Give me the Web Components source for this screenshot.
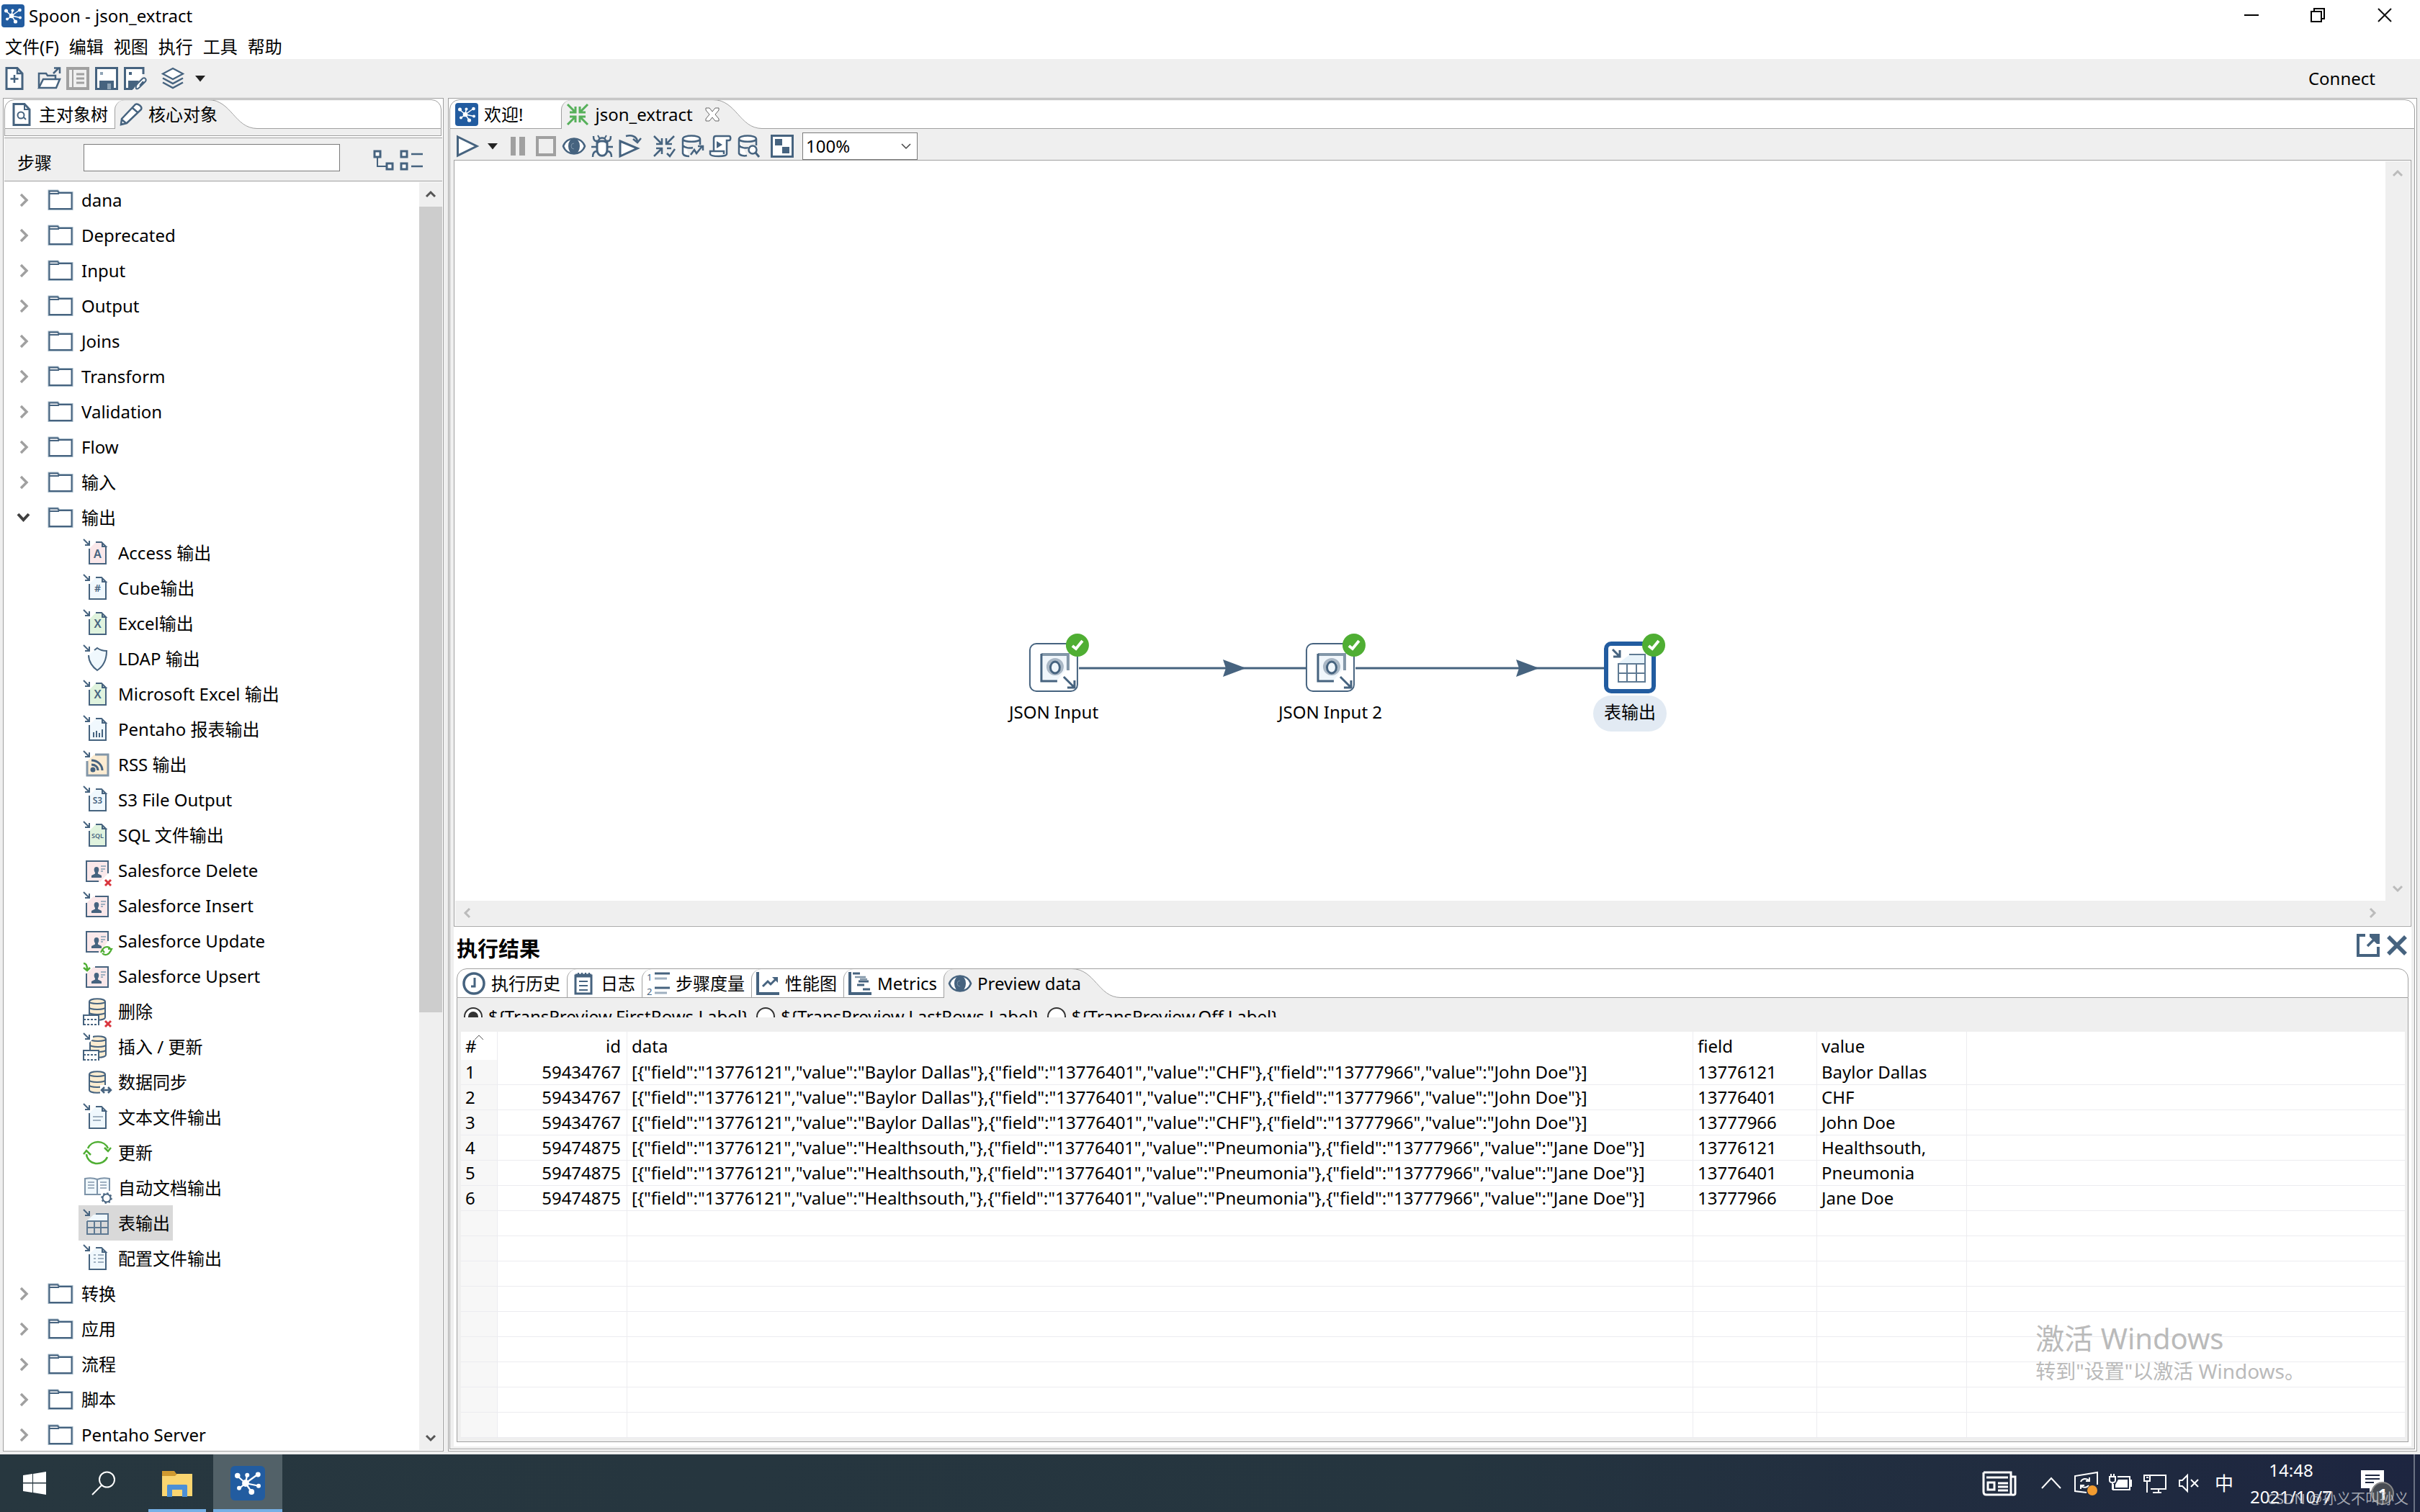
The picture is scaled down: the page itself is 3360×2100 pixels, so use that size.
<!DOCTYPE html>
<html lang="zh-CN">
<head>
<meta charset="utf-8">
<title>Spoon - json_extract</title>
<style>
  html, body { margin: 0; }
  body {
    --ink: #46637f; --face: #efefef; --line: #a0a0a0; --blue: #225ca0; --green: #4fae33;
    min-height: 100vh; display: flex; flex-direction: column; background: var(--face); color: #000;
    font: 24px/32px "Noto Sans", "Noto Sans CJK SC", sans-serif;
  }
  spoon-workbench { flex: 1; }
</style>
</head>
<body>
<spoon-titlebar caption="Spoon - json_extract"></spoon-titlebar>
<spoon-menubar items="文件(F),编辑,视图,执行,工具,帮助"></spoon-menubar>
<spoon-toolbar></spoon-toolbar>
<spoon-workbench>
  <spoon-explorer slot="side"></spoon-explorer>
  <spoon-editor slot="main"></spoon-editor>
</spoon-workbench>
<win-taskbar></win-taskbar>
<win-activation></win-activation>

<script>
const doc = (fill, inner) => `<path d="M9 14V35H32V12L26 5H18L9 14Z" fill="${fill}" stroke="none"/><path d="M9 14V35H32V12M18 5H26L32 11H27V6" stroke-width="2"/>${inner}<path d="M1 1L9 9M9 3V9H3" stroke-width="2"/>`;
const inArrow = '<path d="M1 1L9 9M9 3V9H3" stroke-width="2"/>';
const glyph = (t, s, y) => `<text x="20.5" y="${y}" font-size="${s}" text-anchor="middle" fill="#46637f" stroke="none" font-family="Noto Sans" font-weight="600">${t}</text>`;
const person = '<path d="M12 30V27L17 24.500V23C15 20 15 15 19 15S23 20 21 23V24.500L26 27V30Z" fill="#46637f" stroke="none"/><path d="M25 14H32M25 18H31M25 21H28" stroke-width="2" stroke="#9fb0c0"/>';
const redX = '<path d="M31 33L39 41M39 33L31 41" stroke="#d9363e" stroke-width="3"/>';
const db = '<path d="M9 6V28C9 33 31 33 31 28V6C31 1 9 1 9 6Z" fill="#fbecd0"/><path d="M9 6C9 10 31 10 31 6M9 14C9 18 31 18 31 14M9 21C9 25 31 25 31 21"/>';
const grid = '<path d="M1 24H22V39H1Z" fill="#fff" stroke="none"/><path d="M1 39V25H22V39"/><path d="M1 31H22M1 38H22" stroke-dasharray="3 2"/>';
const hub = '<rect width="32" height="32" rx="4" fill="#225ca0" stroke="none"/><g stroke="#fff" stroke-width="1.500"><path d="M14 16L6 9M14 16L15.500 8M14 16L25 8M14 16L26 18.500M14 16L8 21M14 16L19.500 24"/></g><g fill="#fff" stroke="none"><circle cx="14" cy="16" r="3.300"/><circle cx="6.500" cy="9" r="2.500"/><circle cx="15.500" cy="8.500" r="2"/><circle cx="25.500" cy="8" r="2.300"/><circle cx="26" cy="18.500" r="2"/><circle cx="8" cy="20.500" r="2"/><circle cx="19.500" cy="24" r="2.600"/></g>';
const eye = '<path d="M1 16C6 2 26 2 31 16C26 30 6 30 1 16Z" fill="#fff" stroke-width="2.500"/><ellipse cx="16" cy="16" rx="7" ry="10" fill="#46637f"/><path d="M16 12A4 4 0 0 0 16 20" stroke="#7d93a8" stroke-width="1"/>';
const arrowsIn = (c, w) => `<g stroke="${c}" stroke-width="${w}"><path d="M2 2L13 13M13 5V13H5M30 2L19 13M19 5V13H27M2 30L13 19M5 19H13V27"/>`;
const ICONS = {
  hub: [32, hub],
  newfile: [32, '<path d="M5 1.500H20L27 9V30.500H5Z" fill="#fff" stroke-width="3"/><path d="M20 2V9H27M16 11V22M10.500 16.500H21.500" stroke-width="2.500"/>'],
  open: [32, '<path d="M2 28V9H12L14 12H25V17" stroke-width="2.500"/><path d="M2 29L8 17H31L26 29Z" fill="#fff" stroke-width="2.500"/><path d="M22 9L30 1M23 1.500H31V9" stroke-width="2.500"/>'],
  explore: [32, '<g stroke="#a0a0a0"><path d="M2 2H30V30H2Z" stroke-width="4"/><path d="M9 4V28" stroke-width="2"/><path d="M14 10H25M14 16H25M14 22H25" stroke-width="3"/></g>'],
  save: [32, '<path d="M1.500 1.500H30.500V30.500H1.500Z" fill="#fff" stroke-width="3"/><path d="M6 31V19H26V31Z" fill="#46637f" stroke="none"/><path d="M17 23H22V31H17ZM7 7H11V11H7Z" fill="#8fa3b5" stroke="none"/>'],
  saveas: [32, '<path d="M27 10V1.500H1.500V30.500H12" fill="#fff" stroke-width="3"/><path d="M6 31V19H21L13 31Z" fill="#46637f" stroke="none"/><path d="M7 7H11V11H7Z" fill="#46637f" stroke="none"/><path d="M17 30C16 27 17 25 19 23L26 16C29 14 32 17 30 20L22 28C20 30 18 31 17 30ZM22 26L27 20" fill="#fff" stroke-width="2"/>'],
  layers: [32, '<path d="M16 2L30 9.500L16 17L2 9.500Z" fill="#fff" stroke-width="2.200"/><path d="M2 15.500L16 23L30 15.500M2 21.500L16 29L30 21.500" stroke-width="2.500"/>'],
  caret: [16, '<path d="M1 4H15L8 12.500Z" fill="#222" stroke="none"/>'],
  filesearch: [32, '<path d="M5 1.500H20L27 9V30.500H5Z" fill="#fff" stroke-width="3"/><path d="M20 2V9H27" /><circle cx="15" cy="17" r="4.500"/><path d="M19 20L22 23"/>'],
  pencil: [32, '<path d="M2 30L3 22L22 2C25 0 32 5 30 9L10 28Z M18 7L25 13 M3 23L9 28" fill="#fff" stroke-width="2.500"/>'],
  expand: [32, '<path d="M3 4H11V12H3ZM20 21H28V29H20Z" fill="#fff" stroke-width="3"/><path d="M7 13V25H19" stroke-width="2"/>'],
  collapse: [32, '<path d="M2 4H10V12H2ZM2 21H10V29H2Z" fill="#fff" stroke-width="3"/><path d="M16 8H32M16 25H32" stroke-width="2.500"/>'],
  right: [24, '<path d="M8 4L16 12L8 20" stroke="#a0a0a0" stroke-width="3.500"/>'],
  down: [24, '<path d="M4 7L11.500 15L19 7" stroke="#404040" stroke-width="4"/>'],
  folder: [36, '<path d="M2.500 5.500H14L16 8H33.500V30H2.500Z" fill="#fff" stroke="#9fb4c4" stroke-width="4"/><path d="M2.500 5.500H14L16 8H33.500V30H2.500Z" fill="#fff" stroke-width="2"/><path d="M3 9H16"/>'],
  access: [40, doc('#fae8ea', glyph('A', 16, 27))],
  cube: [40, doc('#f0f8fd', glyph('#', 14, 25))],
  excel: [40, doc('#e0f3de', glyph('X', 16, 26))],
  ldap: [40, '<path d="M8 15C8 24 14 32 20 36C26 32 33 24 33 9C28 9 24 8 20 5L8 15Z" fill="#f0f8fd" stroke="none"/><path d="M8 15C8 24 14 32 20 36C26 32 33 24 33 9C28 9 24 8 20 5L16 8" stroke-width="2"/>' + inArrow],
  report: [40, doc('#f0f8fd', '<path d="M15 31V24M19 31V22M23 31V25M27 31V20"/>')],
  rss: [40, '<path d="M6 15V34H35V6H16Z" fill="#fcecd2" stroke="none"/><path d="M6 15V35H35V6H17" stroke="#8296a8" stroke-width="3"/><path d="M12 14C20 14 27 20 27 28M12 20C17 20 21 23 21 28" stroke-width="3"/><circle cx="14" cy="27" r="2.500" fill="#46637f"/>' + inArrow],
  s3: [40, doc('#f0f8fd', glyph('S3', 12, 25))],
  sql: [40, doc('#e0f3de', glyph('SQL', 9, 24))],
  sfdelete: [40, '<path d="M5 7H35V24L24 36H5Z" fill="#fae8ea" stroke="none"/><path d="M35 24V7H5V35H22"/>' + person + redX],
  sfinsert: [40, '<path d="M5 16V35H35V7H15Z" fill="#fae8ea" stroke="none"/><path d="M5 16V35H35V7H17"/>' + person + inArrow],
  sfupdate: [40, '<path d="M5 7H35V20L24 36H5Z" fill="#fae8ea" stroke="none"/><path d="M35 20V7H5V35H22"/>' + person + '<path d="M27 34A6.500 6.500 0 0 1 38 30M38 34A6.500 6.500 0 0 1 27 37M25 36L27 32L30 36M35 31H40L38 35" stroke="#4fae33" stroke-width="2.200"/>'],
  sfupsert: [40, '<path d="M5 16V35H35V7H15Z" fill="#fae8ea" stroke="none"/><path d="M5 16V35H35V7H17"/>' + person + '<path d="M1 2C5 2 6 5 6 11M1 8L6 12L10 8" stroke="#4fae33" stroke-width="2.500"/>'],
  dbdelete: [40, db + grid + redX],
  dbinsert: [40, `<g transform="translate(1 3)">${db}</g>` + '<path d="M0 0H14V9L8 15H0Z" fill="#fff" stroke="none"/>' + grid + inArrow],
  dbsync: [40, `<g transform="translate(0 3)">${db}</g>` + '<path d="M24 24H40V40H24Z" fill="#fff" stroke="none"/><path d="M26 31H39M30 27L26 31L30 35M35 27L39 31L35 35" stroke-width="2.500"/>'],
  text: [40, doc('#f0f8fd', '<path d="M14 19H28M14 24H25" stroke="#9fb0c0"/>')],
  update: [40, '<g stroke="#4fae33" stroke-width="2.500"><path d="M7 14A15 14 0 0 1 35 14M34 26A15 14 0 0 1 5 22"/><path d="M39 13L35 18L30 13M1 22L5 17L11 23"/></g>'],
  docs: [40, '<path d="M20 8C15 6 8 6 3 7V29H20H25M20 8V29M20 8C25 6 32 6 37 7V24" fill="#f0f8fd" stroke="#7d93a8"/><path d="M7 12H16M7 16H16M7 20H16M24 12H33M24 16H33M24 20H33" stroke="#9fb0c0"/><circle cx="33" cy="34" r="5.500" fill="#fff"/><circle cx="33" cy="34" r="7" stroke-dasharray="2.500 3" stroke-width="1.500"/>'],
  table: [40, '<path d="M6 16H35V8H15Z" fill="#f0f8fd" stroke="none"/><path d="M6 17V35H35V7H18M6 17H35M6 26H35M16 17V35M25 17V35" stroke="#5f7a93"/>' + inArrow],
  config: [40, doc('#f0f8fd', '<path d="M15 15H18M21 15H29M15 20H18M21 20H29M15 25H18M21 25H29" stroke="#9fb0c0"/>')],
  play: [32, '<path d="M2.500 3L29 16L2.500 29Z" fill="#fff" stroke-width="3"/>'],
  pause: [32, '<path d="M6 3H13V29H6ZM18 3H26V29H18Z" fill="#a0a0a0" stroke="none"/>'],
  stop: [32, '<path d="M4 4H28V28H4Z" stroke="#a0a0a0" stroke-width="4"/>'],
  eye: [32, eye],
  bug: [32, '<path d="M11 9C11 3 21 3 21 9M8 9C4 9 4 5 4 2M24 9C28 9 28 5 28 2M8 17H1M24 17H31M9 23C4 23 3 27 3 31M23 23C28 23 29 27 29 31" stroke-width="2.500"/><path d="M9 9H23V21C23 32 9 32 9 21Z" fill="#fff" stroke-width="3"/><path d="M10 1L13 6M22 1L19 6M9 12L14 9M23 12L18 9" />'],
  replay: [32, '<path d="M2 9L26 19L2 30Z" fill="#fff" stroke-width="3"/><path d="M10 2C19 0 25 3 26 9M20 6L26 11L31 5" stroke-width="2.500"/>'],
  verify: [32, arrowsIn('#46637f', 2.5) + '</g><path d="M20 26L24 30L31 20M20 19H26" stroke-width="2.500"/>'],
  impact: [32, '<path d="M3 6V26C4 29 8 30 12 30M27 6V14M3 6C3 0 27 0 27 6C27 11 3 11 3 6M3 15C6 19 14 19 17 18" fill="#fff" stroke-width="2.500"/><path d="M14 28L19 21L22 26L30 16M24 16H31V22" stroke-width="2.500"/>'],
  script: [32, '<path d="M7 22V5C7 3 8 2 10 2H28C31 2 31 8 28 8H25V27C25 31 3 31 2 27V23H21V27" fill="#fff" stroke-width="2.500"/><path d="M11 9L19 14L11 19Z" fill="#46637f" stroke="none"/>'],
  dbsearch: [32, '<path d="M3 6V26C4 29 10 30 14 29M27 6V15M3 6C3 0 27 0 27 6C27 11 3 11 3 6M3 15C6 19 14 19 16 18" fill="#fff" stroke-width="2.500"/><circle cx="22" cy="21" r="5.500" fill="#fff" stroke-width="2.500"/><path d="M26 25L31 31" stroke-width="3"/>'],
  grid: [32, '<path d="M1.500 1.500H30.500V30.500H1.500Z" fill="#fff" stroke-width="3"/><path d="M6 6H16V15H6ZM16 17H26V26H16Z" fill="#46637f" stroke="none"/>'],
  transform: [32, arrowsIn('#56b05a', 3) + '<path d="M30 30L19 19M27 19H19V27"/></g>'],
  close: [20, '<path d="M1 1H6L10 6L14 1H19V4L14 10L19 16V19H14L10 14L6 19H1V16L6 10L1 4Z" fill="#fff" stroke="#666" stroke-width="1"/>'],
  history: [32, '<circle cx="16" cy="16" r="14" fill="#fff" stroke-width="3.500"/><path d="M17 8V20H12" stroke-width="3"/>'],
  log: [32, '<path d="M5 5H27V30H5Z" fill="#fff" stroke-width="3"/><path d="M5 5H27" stroke-width="5"/><path d="M9 1V5M14 1V5M19 1V5M24 1V5M10 13H22M10 19H22M10 25H22"/>'],
  steps: [32, '<text x="0" y="12" font-size="13" fill="#46637f" stroke="none">1</text><text x="0" y="32" font-size="13" fill="#46637f" stroke="none">2</text><path d="M11 2H32M11 22H32" stroke-width="3"/><path d="M11 9H28M11 29H28" stroke="#9fb0c0" stroke-width="3"/>'],
  perf: [32, '<path d="M2 0V30H32" stroke-width="4"/><path d="M9 20L16 13L20 17L28 9" stroke-width="3"/><path d="M22 7H30V15Z" fill="#46637f" stroke="none"/>'],
  metrics: [32, '<path d="M2 0V30H32" stroke-width="4"/><path d="M6 2H16M14 13H28M12 18H22M20 24H30" stroke-width="3"/><path d="M9 7H24M16 10H26" stroke-width="2.500" stroke="#8296a8"/>'],
  popout: [32, '<path d="M12 2H2V30H30V18" stroke-width="4"/><path d="M15 17L28 4" stroke-width="3.500"/><path d="M18 0H32V14H28L18 4Z" fill="#46637f" stroke="none"/>'],
  cross: [32, '<path d="M4 4L28 28M28 4L4 28" stroke-width="5.500"/>'],
  json: [48, '<path d="M7 5H45V22L28 43H7Z" fill="#f0f6fb" stroke="none"/><path d="M44 28V6H7" stroke="#8296a8" stroke-width="4"/><path d="M7 5V43H29" stroke-width="3"/><circle cx="26" cy="23" r="10" stroke="#a9b7c5" stroke-width="4"/><ellipse cx="26" cy="24" rx="6.500" ry="8" stroke-width="3"/><path d="M38 37L52 51M53 42V52H43" stroke-width="3"/>'],
  tableout: [48, '<path d="M8 18H45V6H24Z" fill="#e8f3fa" stroke="none"/><path d="M8 44V19H45V44Z" stroke="#5f7a93"/><path d="M23 6H45V19M8 32H45M20 19V44M33 19V44" stroke="#5f7a93"/><path d="M0-1L10 9M10 0V9H1" stroke-width="3"/>'],
  check: [32, '<circle cx="16" cy="16" r="16" fill="#4fae33" stroke="none"/><path d="M9 17L14 21L23 10" stroke="#fff" stroke-width="4"/>'],
  min: [20, '<path d="M0 10H20" stroke="#000" stroke-width="2"/>'],
  restore: [20, '<path d="M1 5H15V19H1ZM5 5V1H19V15H15" stroke="#000"/>'],
  x: [20, '<path d="M1 1L19 19M19 1L1 19" stroke="#111"/>'],
  up: [16, '<path d="M2 11L8 5L14 11" stroke-width="3" stroke="currentColor"/>'],
  dn: [16, '<path d="M2 5L8 11L14 5" stroke-width="3" stroke="currentColor"/>'],
  lt: [16, '<path d="M11 2L5 8L11 14" stroke-width="3" stroke="currentColor"/>'],
  rt: [16, '<path d="M5 2L11 8L5 14" stroke-width="3" stroke="currentColor"/>'],
  thin: [16, '<path d="M2 5L8 11L14 5" stroke="#444" stroke-width="1.500"/>'],
  windows: [32, '<path d="M0 5L13 3V15H0ZM14 3L32 0V15H14ZM0 16.500H13V29L0 27ZM14 16.500H32V32L14 29Z" fill="#fff" stroke="none"/>'],
  search: [32, '<circle cx="20.500" cy="11" r="10.500" stroke="#fff"/><path d="M13 19L0 32" stroke="#fff"/>'],
  files: [44, '<path d="M1 5H18L21 9H43V40H1Z" fill="#d09a30" stroke="none"/><path d="M1 12H19L22 9H43V40H1Z" fill="#fad570" stroke="none"/><path d="M8 41V26C8 24 9 24 10 24H34C36 24 36 25 36 26V41H29V31H15V41Z" fill="#4c8fd6" stroke="none"/>'],
  news: [48, '<g stroke="#fff" stroke-width="3"><path d="M2 9H40V38C40 41 46 41 46 38V15H40M2 9V36C2 39 4 40 6 40H42"/><path d="M6 16H36M22 24H36M22 29H36M22 34H36M8 23H17V33H8Z"/></g>'],
  chev: [32, '<path d="M3 23L16 9L29 23" stroke="#fff"/>'],
  sync: [32, '<path d="M32 18V1L1 6V27L17 29" stroke="#fff"/><path d="M9 14C11 9 17 9 20 12M21 8V13H16M20 19C18 22 13 23 10 20M9 24V19H14" stroke="#fff"/><circle cx="25" cy="26" r="7" fill="#f29b30" stroke="none"/>'],
  battery: [32, '<path d="M12 7H29V25H6V17M29 12H31V20H29" stroke="#fff"/><path d="M13 11H26V22H9V18Z" fill="#fff" stroke="none"/><path d="M1 7H9V12C9 16 1 16 1 12ZM3 7V3M7 7V3M5 15V25" stroke="#fff"/>'],
  monitor: [32, '<path d="M10 5H31V24H10M1 5H9V13H1ZM5 13V29M21 24V29M13 29H25M4 8H7" stroke="#fff"/>'],
  mute: [32, '<path d="M2 12H6L13 5V27L6 20H2Z" stroke="#fff"/><path d="M18 11L28 21M28 11L18 21" stroke="#fff"/>'],
  notify: [32, '<path d="M0 0H32V25H18L12 31V25H0Z" fill="#fff" stroke="none"/><path d="M6 7H26M6 12H26M6 17H18" stroke="#1e2840"/>']
};

const BASE = `*,:host{box-sizing:border-box}
button,input,select{font:inherit;color:inherit;margin:0;padding:0;border:0;background:none;border-radius:0;outline:0}
button{display:inline-flex;align-items:center;justify-content:center}`;
class El extends HTMLElement {
  connectedCallback() {
    if (this.shadowRoot) return;
    this.attachShadow({ mode: 'open' }).innerHTML = `<style>${BASE}${this.css()}</style>${this.html()}`;
  }
  css() { return ':host{display:block}'; }
  html() { return '<slot></slot>'; }
}
const def = (name, css, html) => customElements.define(name, class extends El {
  css() { return typeof css === 'function' ? css(this) : css; }
  html() { return typeof html === 'function' ? html(this) : html; }
});
const ic = (name, size) => `<sp-icon name="${name}"${size ? ` size="${size}"` : ''}></sp-icon>`;

def('sp-icon', e => {
  const s = e.getAttribute('size') || ICONS[e.getAttribute('name')][0];
  return `:host{display:block;flex:none;width:${s}px;height:${s}px} svg{display:block;overflow:visible}`;
}, e => {
  const [v, body] = ICONS[e.getAttribute('name')];
  return `<svg width="100%" height="100%" viewBox="0 0 ${v} ${v}" fill="none" stroke="#46637f" stroke-width="2" aria-hidden="true">${body}</svg>`;
});

def('sp-scrollbar', `
  :host{display:flex;flex:none;justify-content:space-between;align-items:center;background:var(--face);color:#bbb}
  :host([axis=y]){width:34px;flex-direction:column;padding:9px 0}
  :host([axis=x]){height:34px;padding:0 44px 0 9px}
  :host([live]){width:32px;color:#555}
  .thumb{width:100%;background:#cdcdcd;margin:9px 0 auto;height:1119px}`,
  e => e.getAttribute('axis') === 'y' ? ic('up') + (e.hasAttribute('live') ? '<div class="thumb"></div>' : '') + ic('dn') : ic('lt') + ic('rt'));

def('spoon-titlebar', `
  :host{display:flex;align-items:center;height:48px;background:#fff;padding:0 16px 4px 2px}
  h1{flex:1;margin:0 0 0 6px;font-size:24px;font-weight:400}
  .win{display:flex;align-self:flex-start}
  .win button{width:92px;height:42px}.win button:last-child{width:94px;margin-right:-14px}`,
  e => `${ic('hub')}<h1>${e.getAttribute('caption')}</h1><div class="win">
    <button aria-label="Minimize">${ic('min')}</button><button aria-label="Restore">${ic('restore')}</button><button aria-label="Close">${ic('x')}</button></div>`);

def('spoon-menubar', `:host{display:block;background:#fff;height:34px} nav{display:flex} button{padding:0 7px;height:34px}`,
  e => `<nav>${e.getAttribute('items').split(',').map(t => `<button>${t}</button>`).join('')}</nav>`);

def('spoon-toolbar', `
  :host{display:flex;align-items:center;height:54px;padding:0 62px 0 4px}
  .g{display:flex;gap:8px;align-items:center}.g2{margin-left:20px}
  .new{margin-right:8px}
  .c{margin-left:auto}`,
  `<div class="g"><button class="new" aria-label="New">${ic('newfile')}</button><button aria-label="Open">${ic('open')}</button><button aria-label="Explore">${ic('explore')}</button><button aria-label="Save">${ic('save')}</button><button aria-label="Save as">${ic('saveas')}</button></div>
   <div class="g g2"><button aria-label="Perspective">${ic('layers')}</button><button aria-label="Choose perspective">&nbsp;${ic('caret')}</button></div><button class="c">Connect</button>`);

def('spoon-workbench', `
  :host{display:grid;grid-template-columns:612px minmax(0,1fr);gap:6px;padding:0 4px 4px}
  ::slotted(*){min-width:0}`,
  '<slot name="side"></slot><slot name="main"></slot>');

/* A header of tabs; the slotted content is the body of the folder. */
def('sp-tabs', `
  :host{display:flex;flex-direction:column;min-height:0}
  header{display:flex;height:41px;background:#fff;border:1px solid var(--line);border-radius:14px 14px 0 0;flex:none}
  .body{flex:1;display:flex;flex-direction:column;min-height:0;background:var(--face);border:1px solid var(--line);border-top:0}`,
  '<header role="tablist"><slot name="tab"></slot></header><div class="body"><slot></slot></div>');
def('sp-tab', e => `
  :host{display:flex;height:40px;position:relative}
  :host([active]){margin-bottom:-1px}
  button{padding:0 9px 0 6px;gap:8px;height:39px;border-left:1px solid var(--line);border-top-left-radius:14px;white-space:nowrap}
  :host(:first-child) button{border-left-color:transparent}
  :host([wide]) button{padding-right:53px}
  :host([active]) button{background:var(--face);height:40px;padding-right:0}
  button sp-icon:last-child:not(:first-child){margin:0 4px 0 9px}
  svg{display:block;flex:none;margin:-1px 0 0 -13px;pointer-events:none}`,
  e => `<button role="tab" aria-selected="${e.hasAttribute('active')}">${ic(e.getAttribute('icon'))}<span>${e.getAttribute('label')}</span>${e.hasAttribute('closable') ? ic('close') : ''}</button>
  ${e.hasAttribute('active') ? `<svg width="68" height="41" viewBox="0 0 68 41" aria-hidden="true"><path d="M0 1C30 1 34 40.500 68 40.500V1Z" fill="#fff"/><path d="M13 3C33 10 38 40 68 40.500V41H13Z" fill="#efefef"/><path d="M0 .5C33 1 36 40 68 40.500" fill="none" stroke="#a0a0a0"/></svg>` : ''}`);

const TREE = [
  ...['dana','Deprecated','Input','Output','Joins','Transform','Validation','Flow','输入'].map(t => ['f', t]), ['o', '输出'],
  ['access','Access 输出'],['cube','Cube输出'],['excel','Excel输出'],['ldap','LDAP 输出'],['excel','Microsoft Excel 输出'],['report','Pentaho 报表输出'],['rss','RSS 输出'],['s3','S3 File Output'],['sql','SQL 文件输出'],['sfdelete','Salesforce Delete'],['sfinsert','Salesforce Insert'],['sfupdate','Salesforce Update'],['sfupsert','Salesforce Upsert'],['dbdelete','删除'],['dbinsert','插入 / 更新'],['dbsync','数据同步'],['text','文本文件输出'],['update','更新'],['docs','自动文档输出'],['table','表输出'],['config','配置文件输出'],
  ...['转换','应用','流程','脚本','Pentaho Server'].map(t => ['f', t])
];
def('sp-tree-folder', `:host{display:flex;align-items:center;height:49px;padding-left:15px} span{margin-left:11px} sp-icon+sp-icon{margin-left:21px}`,
  e => `${ic(e.hasAttribute('open') ? 'down' : 'right')}${ic('folder')}<span><slot></slot></span>`);
def('sp-tree-step', `:host{display:flex;height:49px;padding-left:103px} div{display:flex;align-items:center;gap:9px;padding:0 4px 0 6px} :host([selected]) div{background:#d9d9d9}`,
  e => `<div>${ic(e.getAttribute('icon'))}<span><slot></slot></span></div>`);

def('spoon-explorer', `
  :host{display:flex;flex-direction:column;background:#fff;border:1px solid var(--line);padding:1px}
  sp-tabs{margin:0 1px 1px 0}.spacer{height:9px}
  .find{display:flex;height:61px;background:var(--face);border:1px solid var(--line);border-width:1px 0;align-items:center;padding:0 27px 0 18px;margin-top:1px}
  label{width:92px;padding-top:8px}
  input{width:356px;height:38px;background:#fff;border:1px solid #7a7a7a;margin-bottom:6px;padding:0 6px}
  .btns{margin-left:auto;display:flex;gap:6px}
  .list{display:flex;flex:1;padding-top:1px}
  .tree{flex:1;height:1760px;overflow:hidden}`,
  `<sp-tabs><sp-tab slot="tab" icon="filesearch" label="主对象树"></sp-tab><sp-tab slot="tab" icon="pencil" label="核心对象" active></sp-tab><div class="spacer"></div></sp-tabs>
  <div class="find"><label for="q">步骤</label><input id="q" type="text"><div class="btns"><button aria-label="Expand all">${ic('expand')}</button><button aria-label="Collapse all">${ic('collapse')}</button></div></div>
  <div class="list"><div class="tree" role="tree">${TREE.map(([k, t]) => k === 'f' || k === 'o' ? `<sp-tree-folder role="treeitem"${k === 'o' ? ' open' : ''}>${t}</sp-tree-folder>` : `<sp-tree-step role="treeitem" icon="${k}"${k === 'table' ? ' selected' : ''}>${t}</sp-tree-step>`).join('')}</div><sp-scrollbar axis="y" live></sp-scrollbar></div>`);

def('spoon-editor', `
  :host{display:flex;flex-direction:column;background:#fff;border:1px solid var(--line);padding:1px 2px 2px 1px}
  sp-tabs{flex:1}
  .bar{display:flex;align-items:center;height:43px;padding:5px 5px 0 8px;gap:7px}
  .bar .drop{width:24px}
  .gap{margin-left:8px}
  .zoom{display:grid;width:160px;height:38px;margin-left:5px;align-items:center}
  .zoom>*{grid-area:1/1}.zoom sp-icon{justify-self:end;margin-right:8px;pointer-events:none}
  select{appearance:none;width:160px;height:38px;background:#fff;border:1px solid #7a7a7a;padding:0 4px}
  spoon-canvas{flex:1;margin:0 4px 0 5px}
  spoon-results{margin:0 4px 3px 5px}`,
  `<sp-tabs><sp-tab slot="tab" icon="hub" label="欢迎!" wide></sp-tab><sp-tab slot="tab" icon="transform" label="json_extract" active closable></sp-tab>
  <div class="bar"><button aria-label="Run">${ic('play')}</button><button class="drop" aria-label="Run options">${ic('caret')}</button><button aria-label="Pause">${ic('pause')}</button><button aria-label="Stop">${ic('stop')}</button>
  ${['eye','bug','replay'].map(n => `<button aria-label="${n}">${ic(n)}</button>`).join('')}<button class="gap" aria-label="verify">${ic('verify')}</button>
  ${['impact','script','dbsearch'].map(n => `<button aria-label="${n}">${ic(n)}</button>`).join('')}<button class="gap" aria-label="Results">${ic('grid')}</button>
  <div class="zoom"><select aria-label="Zoom"><option>100%</option></select>${ic('thin')}</div></div>
  <spoon-canvas></spoon-canvas><spoon-results></spoon-results></sp-tabs>`);

def('sp-step', e => `
  :host{position:absolute;left:${e.getAttribute('x')}px;top:${e.getAttribute('y')}px;transform:translateX(-50%);display:flex;flex-direction:column;align-items:center;gap:3px}
  .box{position:relative;width:68px;height:68px;margin:2px;display:grid;place-items:center;background:#fff;border:2px solid var(--ink);border-radius:10px}
  :host([selected]) .box{width:72px;height:72px;margin:0;border:6px solid var(--blue)}
  .ok{position:absolute;right:-17px;top:-15px}
  :host([selected]) .ok{right:-19px;top:-17px}
  span{height:50px;line-height:46px;white-space:nowrap;padding:0 15px;border-radius:25px}
  :host([selected]) span{background:#e2eaf3}`,
  e => `<div class="box">${ic(e.getAttribute('icon'))}<sp-icon class="ok" name="check"></sp-icon></div><span><slot></slot></span>`);
def('spoon-canvas', `
  :host{display:grid;grid-template:minmax(0,1fr) 34px/minmax(0,1fr) 34px;background:#fff;border:1px solid var(--line);padding:1px}
  .area{position:relative;overflow:hidden}
  svg{position:absolute;left:0;top:0}
  .x{grid-column:1/3;padding-right:44px}`,
  `<div class="area"><svg width="1600" height="760" viewBox="0 0 1600 760" aria-hidden="true" fill="#46637f"><path d="M866 702.500H1182V705.500H866ZM1250 702.500H1596V705.500H1250Z"/><path d="M1066 692L1098 704L1066 716L1070 704ZM1473 692L1505 704L1473 716L1477 704Z"/></svg>
   <sp-step icon="json" x="831" y="667">JSON Input</sp-step><sp-step icon="json" x="1215" y="667">JSON Input 2</sp-step><sp-step icon="tableout" x="1631" y="667" selected>表输出</sp-step></div>
   <sp-scrollbar axis="y"></sp-scrollbar><sp-scrollbar class="x" axis="x"></sp-scrollbar>`);

const A = '[{"field":"13776121","value":"Baylor Dallas"},{"field":"13776401","value":"CHF"},{"field":"13777966","value":"John Doe"}]';
const B = '[{"field":"13776121","value":"Healthsouth,"},{"field":"13776401","value":"Pneumonia"},{"field":"13777966","value":"Jane Doe"}]';
const ROWS = [['59434767',A,'13776121','Baylor Dallas'],['59434767',A,'13776401','CHF'],['59434767',A,'13777966','John Doe'],['59474875',B,'13776121','Healthsouth,'],['59474875',B,'13776401','Pneumonia'],['59474875',B,'13777966','Jane Doe']];
def('spoon-results', `
  :host{display:block;background:#fff;padding:0 4px 6px}
  .head{display:flex;align-items:center;height:58px;gap:8px}
  h2{flex:1;margin:0;font-size:29px;font-weight:700;line-height:40px;padding-top:4px}
  .head button{margin-bottom:6px}
  .pick{display:flex;gap:11px;height:18px;margin:9px 0 20px 9px;overflow:hidden;align-items:flex-start}
  .pick label{display:flex;gap:8px;align-items:center;height:34px;line-height:34px;white-space:nowrap}
  input{appearance:none;width:26px;height:26px;border:2px solid #333;border-radius:50%;background:#fff;display:grid;place-items:center}
  input:checked::before{content:"";width:14px;height:14px;border-radius:50%;background:#333}
  .wrap{margin:0 4px 5px 5px;background:#fff}
  table{border-collapse:separate;border-spacing:0;table-layout:fixed;width:100%}
  th,td{font-weight:400;text-align:left;padding:0 6px;height:35px;line-height:34px;border-right:1px solid #ececf0;border-bottom:1px solid #ececf0;white-space:nowrap;overflow:hidden}
  thead th{height:39px;line-height:38px;border-bottom:0}
  th:last-child,td:last-child{border-right:0}
  .id{text-align:right;padding-right:8px}
  tbody th{background:#f7f7f7}
  thead .n{background:#fff}
  .sort{position:absolute;margin:3px 0 0 -4px}`,
  `<div class="head"><h2>执行结果</h2><button aria-label="Detach">${ic('popout')}</button><button aria-label="Close">${ic('cross')}</button></div>
  <sp-tabs><sp-tab slot="tab" icon="history" label="执行历史"></sp-tab><sp-tab slot="tab" icon="log" label="日志"></sp-tab><sp-tab slot="tab" icon="steps" label="步骤度量"></sp-tab><sp-tab slot="tab" icon="perf" label="性能图"></sp-tab><sp-tab slot="tab" icon="metrics" label="Metrics"></sp-tab><sp-tab slot="tab" icon="eye" label="Preview data" active></sp-tab>
  <div class="pick">${['FirstRows', 'LastRows', 'Off'].map((n, i) => `<label><input type="radio" name="p"${i ? '' : ' checked'}>\${TransPreview.${n}.Label}</label>`).join('')}</div>
  <div class="wrap"><table><colgroup><col style="width:51px"><col style="width:180px"><col style="width:1480px"><col style="width:172px"><col style="width:208px"><col></colgroup>
  <thead><tr><th class="n">#<svg class="sort" width="14" height="8" viewBox="0 0 14 8" fill="none" stroke="#555" aria-hidden="true"><path d="M1 7L7 1L13 7"/></svg></th><th class="id">id</th><th>data</th><th>field</th><th>value</th><th></th></tr></thead>
  <tbody>${ROWS.map((r, i) => `<tr><th>${i + 1}</th><td class="id">${r[0]}</td><td>${r[1]}</td><td>${r[2]}</td><td>${r[3]}</td><td></td></tr>`).join('')}${'<tr><th></th><td></td><td></td><td></td><td></td><td></td></tr>'.repeat(9)}</tbody></table></div></sp-tabs>`);

def('win-taskbar', `
  :host{display:flex;height:80px;color:#fff;background:linear-gradient(90deg,#27373f,#25353f 60%,#1d2540);position:relative}
  button{width:96px;height:80px;flex:none}
  .apps{display:flex;gap:2px;margin:0 auto 0 6px}
  .files{border-bottom:4px solid #76b0e6;width:80px;margin:0 8px}
  .on{background:#526168;border-bottom:4px solid #76b0e6}
  .files,.on{padding-top:4px}
  .tray{width:48px}.ime{font-size:26px}
  .clock{width:138px;display:flex;flex-direction:column;align-items:center;line-height:37px;padding-top:3px}
  .note{width:101px;justify-content:flex-start;padding:0 0 4px 28px;position:relative}
  .note b{position:absolute;left:42px;top:38px;width:32px;height:32px;border-radius:50%;background:#484c53;border:2px solid #888;font-size:22px;line-height:28px;text-align:center}
  .desk{width:9px;border-left:2px solid #6b7283}
  .mark{position:absolute;right:16px;bottom:4px;font-size:20px;line-height:28px;color:#c4c6cc;opacity:.8}`,
  `<button aria-label="Start">${ic('windows')}</button><button aria-label="Search">${ic('search')}</button>
  <div class="apps"><button class="files" aria-label="File Explorer">${ic('files')}</button><button class="on" aria-label="Spoon">${ic('hub', 48)}</button></div>
  <button aria-label="News">${ic('news')}</button>${['chev','sync','battery','monitor','mute'].map(n => `<button class="tray" aria-label="${n}">${ic(n)}</button>`).join('')}<button class="tray ime">中</button>
  <div class="clock"><span>14:48</span><span>2021/10/7</span></div><button class="note" aria-label="Notifications">${ic('notify')}<b>1</b></button><div class="desk"></div>
  <div class="mark">CSDN @孙义不叫孙义</div>`);

/* System notice floating over the desktop's lower right corner. */
def('win-activation', `
  :host{position:absolute;right:160px;bottom:176px;color:#bababa;pointer-events:none}
  p{margin:0;font-size:40px;line-height:50px} p+p{font-size:28px;line-height:40px}`,
  '<p>激活 Windows</p><p>转到"设置"以激活 Windows。</p>');
</script>
</body>
</html>
